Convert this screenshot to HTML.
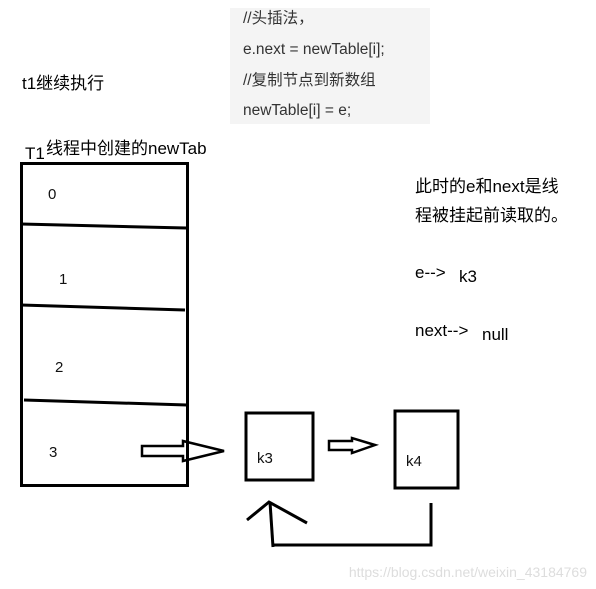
<!DOCTYPE html>
<html><head><meta charset="utf-8"><style>
html,body{margin:0;padding:0;background:#fff;}
svg{display:block}
text{font-family:"Liberation Sans","Noto Sans CJK SC",sans-serif;}
</style></head><body>
<svg width="596" height="589" viewBox="0 0 596 589" xmlns="http://www.w3.org/2000/svg">
<rect x="230" y="8" width="200" height="116" fill="#f4f4f4"/>
<g font-size="15.5" fill="#333">
<text x="243" y="23">//头插法，</text>
<text x="243" y="54">e.next = newTable[i];</text>
<text x="243" y="85">//复制节点到新数组</text>
<text x="243" y="115">newTable[i] = e;</text>
</g>
<g font-size="17" fill="#000">
<text x="22" y="89">t1继续执行</text>
<text x="25" y="159">T1</text>
<text x="46" y="154">线程中创建的newTab</text>
<text x="415" y="192">此时的e和next是线</text>
<text x="415" y="221">程被挂起前读取的。</text>
<text x="415" y="278">e--&gt;</text>
<text x="459" y="282">k3</text>
<text x="415" y="336">next--&gt;</text>
<text x="482" y="340">null</text>
</g>
<g font-size="15" fill="#111">
<text x="48" y="199">0</text>
<text x="59" y="284">1</text>
<text x="55" y="372">2</text>
<text x="49" y="457">3</text>
<text x="257" y="463">k3</text>
<text x="406" y="466">k4</text>
</g>
<g fill="none" stroke="#000" stroke-width="3">
<rect x="21.5" y="163.5" width="166" height="322"/>
<path d="M21 224 L186 228"/>
<path d="M21 305 L185 310"/>
<path d="M24 400 L187 405"/>
<rect x="246" y="413" width="67" height="67"/>
<rect x="395" y="411" width="63" height="77"/>
</g>
<g fill="none" stroke="#000" stroke-width="2.5" stroke-linejoin="miter">
<path d="M142 446 L183 446 L183 441 L224 451 L183 461 L183 456 L142 456 Z"/>
<path d="M329 441 L352 441 L352 438 L375 445 L352 453 L352 450 L329 450 Z"/>
</g>
<g fill="none" stroke="#000" stroke-width="3">
<path d="M247 520 L269 502 L307 523"/>
<path d="M270 502 L273 547"/>
<path d="M273 545 L431 545 L431 503"/>
</g>
<text x="587" y="577" font-size="14" fill="#ddd" text-anchor="end">https://blog.csdn.net/weixin_43184769</text>
</svg>
</body></html>
